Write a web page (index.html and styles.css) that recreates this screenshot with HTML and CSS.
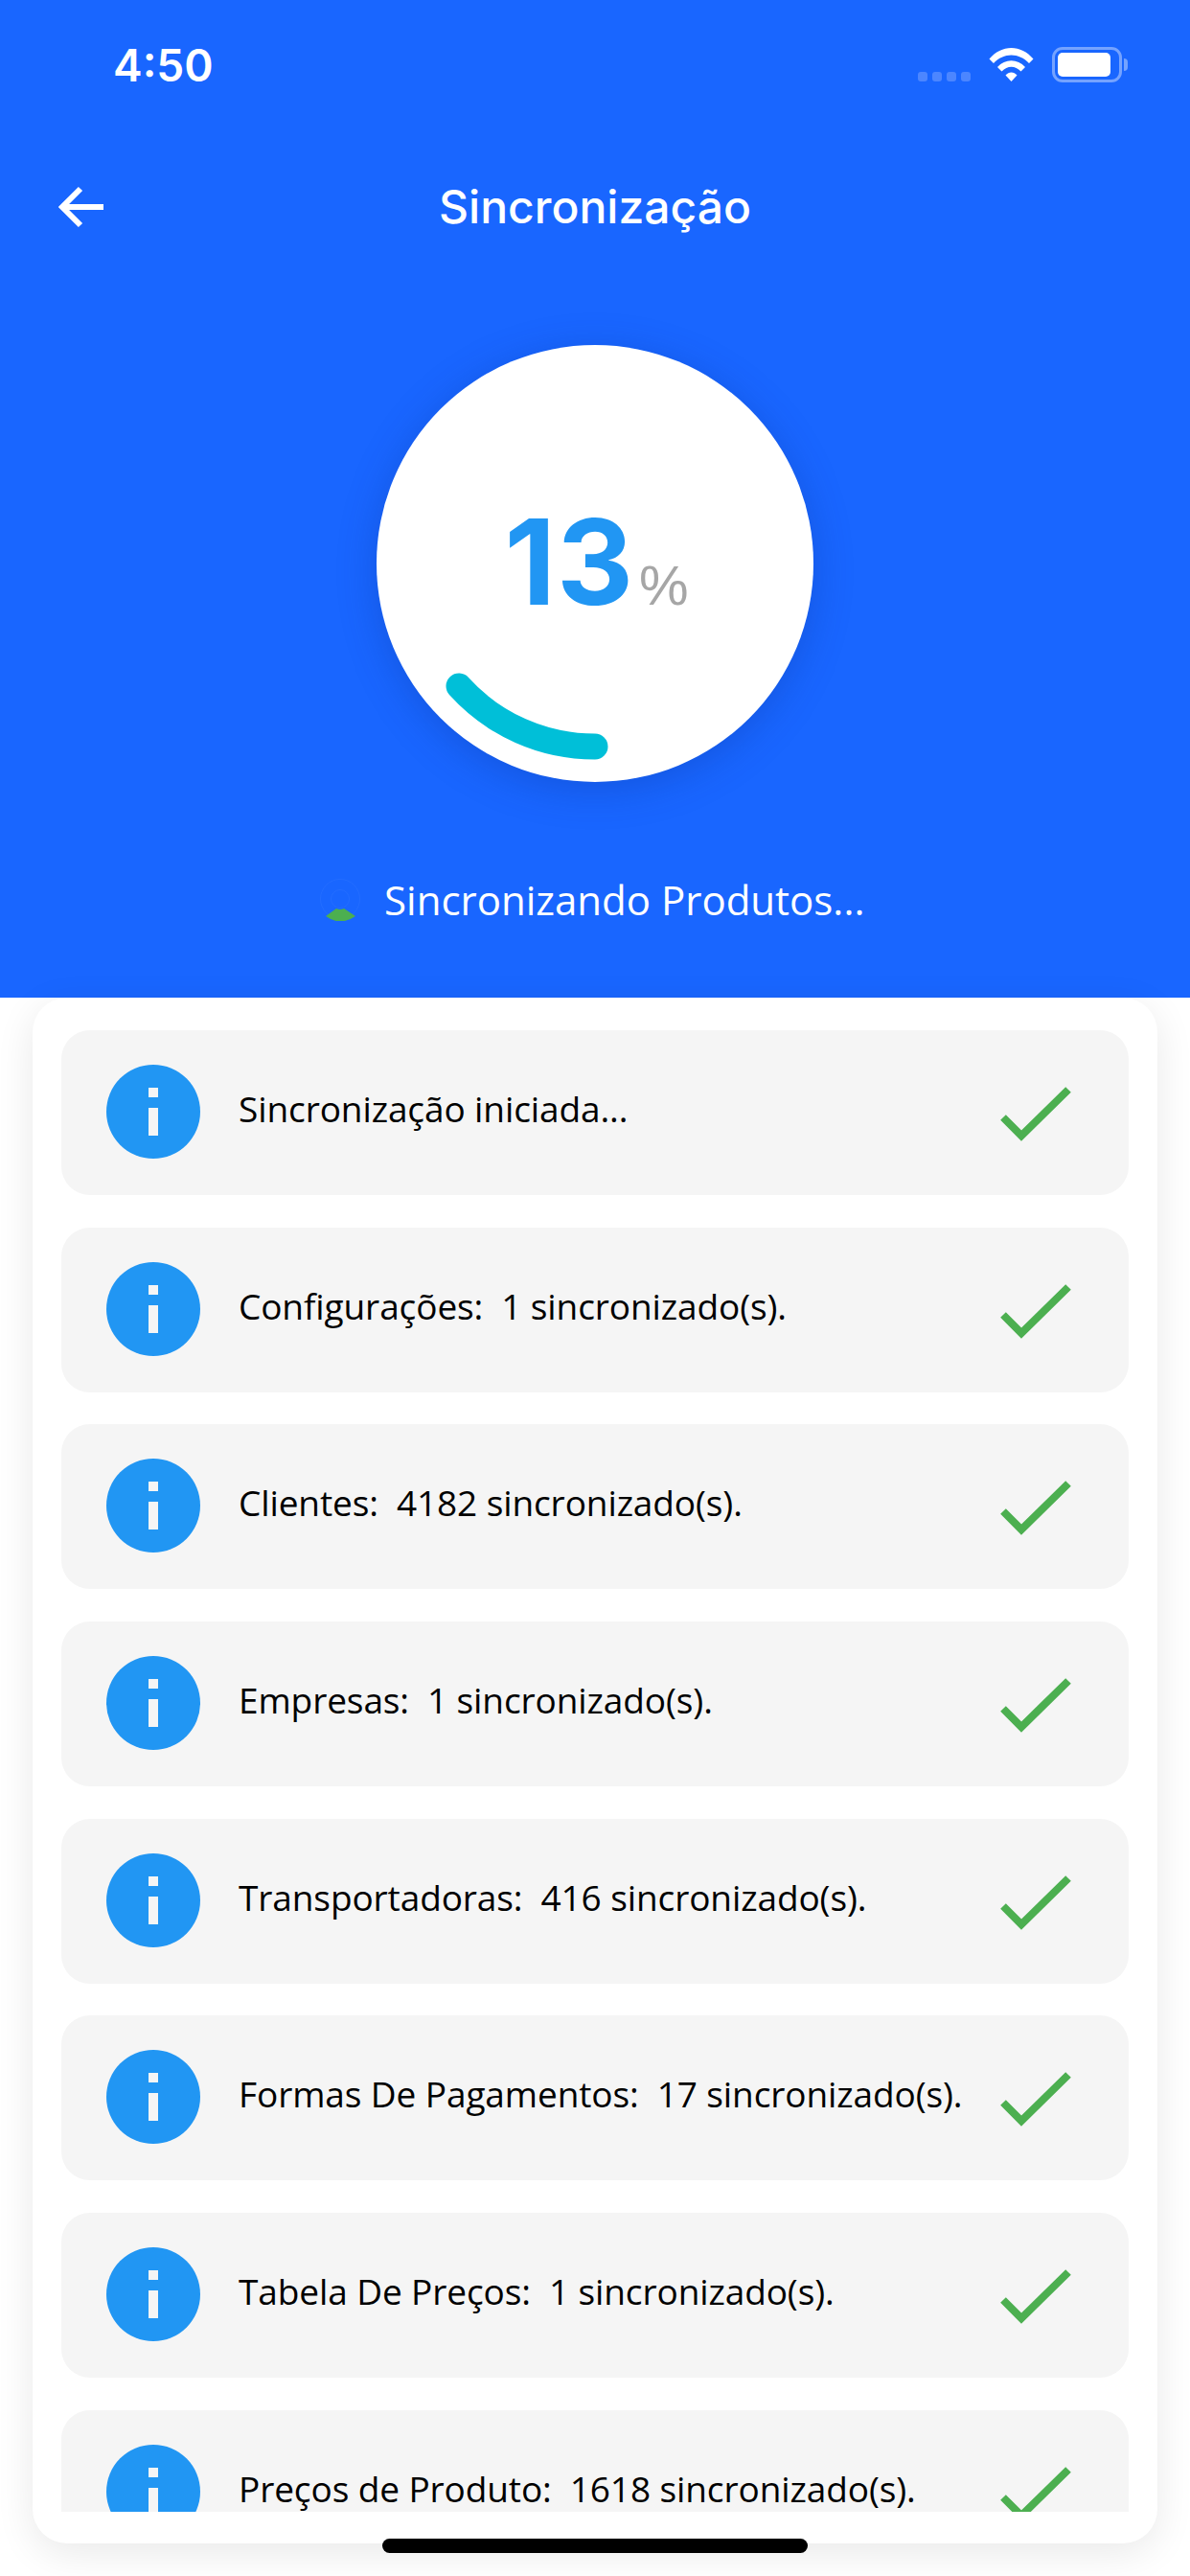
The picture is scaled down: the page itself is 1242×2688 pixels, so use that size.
FILE: index.html
```html
<!DOCTYPE html>
<html lang="pt-BR">
<head>
    <meta charset="UTF-8">
    <meta name="viewport" content="width=device-width, initial-scale=1.0">
    <title>Sincronização</title>
    <link rel="stylesheet" href="styles.css">
</head>
<body>
    <div class="screen">
        <header class="hero">
            <div class="status-bar">
                <span class="clock">4:50</span>
                <div class="status-icons">
                    <div class="signal"><i></i><i></i><i></i><i></i></div>
                    <svg class="wifi" width="47" height="36" viewBox="0 0 47 36">
                        <path d="M0.5 12.5 C13 -3 34 -3 46.5 12.5 L42 17 C31.5 5.5 15.5 5.5 5 17 Z" fill="#fff"/>
                        <path d="M9 21 C17 12 30 12 38 21 L33.5 25.5 C27.5 19 19.5 19 13.5 25.5 Z" fill="#fff"/>
                        <path d="M17.5 29.5 C21 25.5 26 25.5 29.5 29.5 L23.5 36 Z" fill="#fff"/>
                    </svg>
                    <div class="battery"><div class="battery-level"></div></div>
                </div>
            </div>

            <div class="nav">
                <svg class="back" width="48" height="48" viewBox="0 0 48 48">
                    <path d="M48 24 H5 M24 5 L5 24 L24 43" fill="none" stroke="#fff" stroke-width="6"/>
                </svg>
                <h1>Sincronização</h1>
            </div>

            <div class="dial">
                <svg class="dial-arc" width="456" height="456" viewBox="0 0 456 456">
                    <path d="M86 356 A191 191 0 0 0 228 419" fill="none" stroke="#00bfd8" stroke-width="27" stroke-linecap="round"/>
                </svg>
                <div class="percent"><span class="percent-value">13</span><span class="percent-sign">%</span></div>
            </div>

            <div class="current-step">
                <svg class="spinner" width="44" height="44" viewBox="0 0 44 44">
                    <circle cx="21" cy="21" r="20.5" fill="none" stroke="#236dff" stroke-width="1"/>
                    <circle cx="21" cy="21" r="9.5" fill="none" stroke="#236dff" stroke-width="1"/>
                    <path d="M6 39 L17 31 Q21 33 25 31 L37 39 Q21 50 6 39 Z" fill="#4caf50"/>
                </svg>
                <span>Sincronizando Produtos...</span>
            </div>
        </header>

        <main class="log-card">
            <ul class="log-list">
                <li class="log-row">
                    <div class="info-icon"></div>
                    <span class="log-text">Sincronização iniciada...</span>
                    <svg class="check" width="74" height="58" viewBox="0 0 74 58"><path d="M3 32 L22 51 L71 3" fill="none" stroke="#4caf50" stroke-width="8"/></svg>
                </li>
                <li class="log-row">
                    <div class="info-icon"></div>
                    <span class="log-text">Configurações:&nbsp; 1 sincronizado(s).</span>
                    <svg class="check" width="74" height="58" viewBox="0 0 74 58"><path d="M3 32 L22 51 L71 3" fill="none" stroke="#4caf50" stroke-width="8"/></svg>
                </li>
                <li class="log-row">
                    <div class="info-icon"></div>
                    <span class="log-text">Clientes:&nbsp; 4182 sincronizado(s).</span>
                    <svg class="check" width="74" height="58" viewBox="0 0 74 58"><path d="M3 32 L22 51 L71 3" fill="none" stroke="#4caf50" stroke-width="8"/></svg>
                </li>
                <li class="log-row">
                    <div class="info-icon"></div>
                    <span class="log-text">Empresas:&nbsp; 1 sincronizado(s).</span>
                    <svg class="check" width="74" height="58" viewBox="0 0 74 58"><path d="M3 32 L22 51 L71 3" fill="none" stroke="#4caf50" stroke-width="8"/></svg>
                </li>
                <li class="log-row">
                    <div class="info-icon"></div>
                    <span class="log-text">Transportadoras:&nbsp; 416 sincronizado(s).</span>
                    <svg class="check" width="74" height="58" viewBox="0 0 74 58"><path d="M3 32 L22 51 L71 3" fill="none" stroke="#4caf50" stroke-width="8"/></svg>
                </li>
                <li class="log-row">
                    <div class="info-icon"></div>
                    <span class="log-text">Formas De Pagamentos:&nbsp; 17 sincronizado(s).</span>
                    <svg class="check" width="74" height="58" viewBox="0 0 74 58"><path d="M3 32 L22 51 L71 3" fill="none" stroke="#4caf50" stroke-width="8"/></svg>
                </li>
                <li class="log-row">
                    <div class="info-icon"></div>
                    <span class="log-text">Tabela De Preços:&nbsp; 1 sincronizado(s).</span>
                    <svg class="check" width="74" height="58" viewBox="0 0 74 58"><path d="M3 32 L22 51 L71 3" fill="none" stroke="#4caf50" stroke-width="8"/></svg>
                </li>
                <li class="log-row">
                    <div class="info-icon"></div>
                    <span class="log-text">Preços de Produto:&nbsp; 1618 sincronizado(s).</span>
                    <svg class="check" width="74" height="58" viewBox="0 0 74 58"><path d="M3 32 L22 51 L71 3" fill="none" stroke="#4caf50" stroke-width="8"/></svg>
                </li>
            </ul>
        </main>

        <div class="home-bar"></div>
    </div>
</body>
</html>
```

FILE: styles.css
```css
html, body {
    margin: 0;
    padding: 0;
    background-color: #fff;
}
.screen {
    position: relative;
    width: 1242px;
    height: 2688px;
    overflow: hidden;
    font-family: 'Open Sans', sans-serif;
}

/* blue top part */
.hero {
    height: 1041px;
    background-color: #1966ff;
    color: #fff;
}
.status-bar {
    height: 92px;
    padding: 44px 71px 0 118px;
    box-sizing: border-box;
    display: flex;
    justify-content: space-between;
    align-items: flex-start;
}
.clock {
    font-family: Inter, sans-serif;
    font-size: 46px;
    font-weight: 600;
    line-height: 48px;
}
.status-icons {
    display: flex;
    align-items: flex-start;
    padding-top: 5px;
}
.signal {
    display: flex;
    gap: 5px;
    margin-top: 26px;
    margin-right: 19px;
}
.signal i {
    width: 10px;
    height: 10px;
    border-radius: 3px;
    background-color: #4c86ff;
}
.wifi {
    margin-right: 19px;
}
.battery {
    position: relative;
    width: 73px;
    height: 37px;
    box-sizing: border-box;
    border: 3px solid #75a3ff;
    border-radius: 11px;
    padding: 3px;
}
.battery::after {
    content: "";
    position: absolute;
    right: -9px;
    top: 9px;
    width: 4px;
    height: 13px;
    border-radius: 0 6px 6px 0;
    background-color: #75a3ff;
}
.battery-level {
    width: 55px;
    height: 25px;
    border-radius: 5px;
    background-color: #fff;
}

.nav {
    height: 96px;
    margin-top: 76px;
    padding-left: 60px;
    display: flex;
    align-items: center;
    position: relative;
}
.nav h1 {
    position: absolute;
    left: 0;
    right: 0;
    margin: 0 0 2px;
    text-align: center;
    font-family: Inter, sans-serif;
    font-size: 48px;
    font-weight: 500;
}

.dial {
    width: 456px;
    height: 456px;
    margin: 96px auto 0;
    border-radius: 50%;
    background-color: #fff;
    box-shadow: 0 8px 40px rgba(10, 50, 150, 0.3);
    position: relative;
    display: flex;
    justify-content: center;
    align-items: center;
}
.dial-arc {
    position: absolute;
    left: 0;
    top: 0;
}
.percent {
    font-family: 'Liberation Sans', sans-serif;
    display: flex;
    align-items: baseline;
    margin-left: 3px;
    margin-bottom: 4px;
}
.percent-value {
    font-family: Inter, sans-serif;
    font-size: 124px;
    font-weight: 700;
    letter-spacing: 1px;
    color: #2196f3;
    line-height: 125px;
}
.percent-sign {
    font-size: 58px;
    color: #a6a6a6;
    line-height: 60px;
    margin-left: 5px;
}

.current-step {
    margin-top: 96px;
    padding-left: 334px;
    display: flex;
    align-items: center;
    gap: 23px;
    font-size: 42px;
    line-height: 54px;
}

/* white card with the log rows */
.log-card {
    width: 1174px;
    height: 1613px;
    margin-left: 34px;
    padding: 34px 30px 33px;
    box-sizing: border-box;
    background-color: #fff;
    border-radius: 36px;
    box-shadow: 0 10px 40px rgba(0, 0, 0, 0.09);
    position: relative;
}
.log-list {
    list-style: none;
    margin: 0;
    padding: 0;
    height: 100%;
    overflow: hidden;
}
.log-row {
    height: 172px;
    margin-bottom: 33.7px;
    padding: 0 60px 0 47px;
    box-sizing: border-box;
    background-color: #f5f5f5;
    border-radius: 30px;
    display: flex;
    align-items: center;
    font-size: 37px;
    letter-spacing: -0.1px;
    color: #000;
}
.info-icon {
    width: 98px;
    height: 98px;
    margin-bottom: 2px;
    border-radius: 50%;
    background-color: #2196f3;
    position: relative;
    flex-shrink: 0;
}
.info-icon::before,
.info-icon::after {
    content: "";
    position: absolute;
    left: 44px;
    width: 10px;
    background-color: #f5f5f5;
}
.info-icon::before {
    top: 24px;
    height: 10px;
}
.info-icon::after {
    top: 45px;
    height: 29px;
}
.log-text {
    flex: 1;
    margin-left: 40px;
    margin-bottom: 9px;
    white-space: nowrap;
}
.check {
    flex-shrink: 0;
    margin-top: 4px;
}

.home-bar {
    position: absolute;
    left: 399px;
    top: 2649px;
    width: 444px;
    height: 15px;
    border-radius: 8px;
    background-color: #000;
}
```
